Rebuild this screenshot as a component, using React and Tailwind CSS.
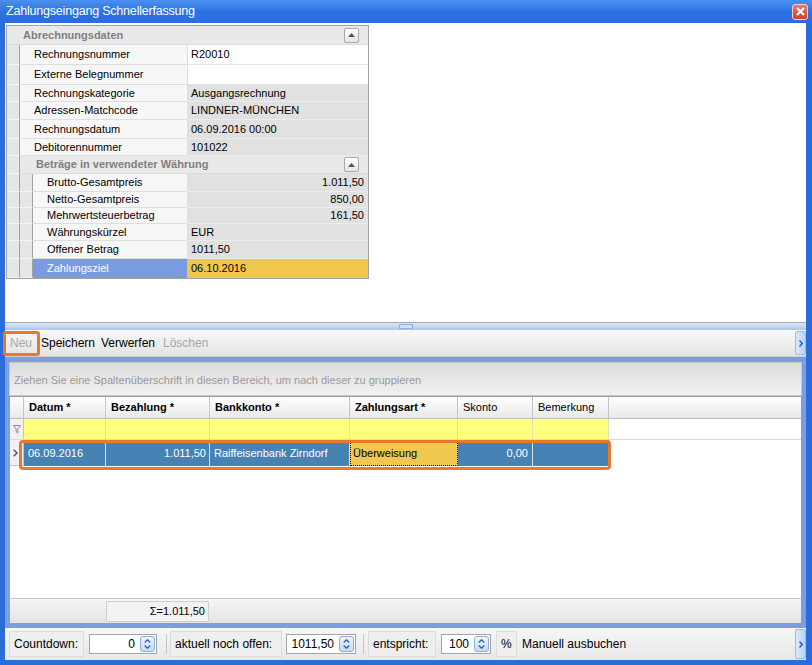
import React from "react";

const UpArrow = ({ color = "#555" }) => (
  <svg width="7" height="4" viewBox="0 0 7 4">
    <path d="M0 4 L3.5 0 L7 4Z" fill={color} />
  </svg>
);

const CollapseBtn = () => (
  <div className="w-[15px] h-[15px] rounded-[2px] border border-[#a9a9a9] bg-linear-to-b from-white to-[#e4e4e4] flex items-center justify-center">
    <UpArrow />
  </div>
);

const Spin = () => (
  <div className="w-[15px] h-[16px] rounded-[3px] border border-[#8eb0dd] bg-linear-to-b from-[#eef5fd] to-[#c3d9f4] flex flex-col items-center justify-center gap-[2px]">
    <svg width="7" height="4" viewBox="0 0 7 4">
      <path d="M0.7 3.5 L3.5 0.8 L6.3 3.5" fill="none" stroke="#2f62ad" strokeWidth="1.3" />
    </svg>
    <svg width="7" height="4" viewBox="0 0 7 4">
      <path d="M0.7 0.5 L3.5 3.2 L6.3 0.5" fill="none" stroke="#2f62ad" strokeWidth="1.3" />
    </svg>
  </div>
);

const ScrollBtn = ({ h }) => (
  <div className={`w-[11px] ${h} rounded-[2px] border border-[#9dbde9] bg-linear-to-r from-[#dbe9fb] to-[#b9d3f3] flex items-center justify-center`}>
    <svg width="4" height="7" viewBox="0 0 4 7">
      <path d="M0.5 0.5 L3.2 3.5 L0.5 6.5" fill="none" stroke="#1f5cc4" strokeWidth="1.4" />
    </svg>
  </div>
);

const rows1 = [
  { l: "Rechnungsnummer", v: "R20010", h: "h-[20px]", white: true },
  { l: "Externe Belegnummer", v: "", h: "h-[20px]", white: true },
  { l: "Rechnungskategorie", v: "Ausgangsrechnung", h: "h-[17px]" },
  { l: "Adressen-Matchcode", v: "LINDNER-MÜNCHEN", h: "h-[18px]" },
  { l: "Rechnungsdatum", v: "06.09.2016 00:00", h: "h-[19px]" },
  { l: "Debitorennummer", v: "101022", h: "h-[17px]" },
];

const rows2 = [
  { l: "Brutto-Gesamtpreis", v: "1.011,50", h: "h-[18px]", r: true },
  { l: "Netto-Gesamtpreis", v: "850,00", h: "h-[16px]", r: true },
  { l: "Mehrwertsteuerbetrag", v: "161,50", h: "h-[16px]", r: true },
  { l: "Währungskürzel", v: "EUR", h: "h-[17px]" },
  { l: "Offener Betrag", v: "1011,50", h: "h-[18px]" },
  { l: "Zahlungsziel", v: "06.10.2016", h: "h-[19px]", sel: true },
];

const Margin = () => <div className="w-[13px] shrink-0 bg-[#e6e6e6] border-b border-[#f3f3f3] border-r border-r-[#a3a3a3]" />;

const PropertyGrid = () => (
  <div className="ml-[1px] mt-[2px] w-[363px] border border-[#a3a3a3] bg-white text-[11px] text-black">
    <div className="h-[19px] flex items-center justify-between bg-[#e9e9e9] pl-[16px] pr-[9px] border-b border-[#dcdcdc]">
      <span className="font-bold text-[#808080]">Abrechnungsdaten</span>
      <CollapseBtn />
    </div>
    {rows1.map((r) => (
      <div key={r.l} className={`flex ${r.h}`}>
        <Margin />
        <div className="w-[167px] shrink-0 flex items-center pl-[14px] bg-[#f7f7f7] border-b border-[#dedede]">{r.l}</div>
        <div className={`flex-1 flex items-center pl-[3px] border-l border-[#dedede] border-b ${r.white ? "bg-white border-b-[#e4e4e4]" : "bg-[#e1e1e1] border-b-[#ececec]"}`}>{r.v}</div>
      </div>
    ))}
    <div className="flex h-[18px]">
      <Margin />
      <div className="flex-1 flex items-center justify-between bg-[#e9e9e9] pl-[16px] pr-[9px] border-b border-[#dcdcdc]">
        <span className="font-bold text-[#808080]">Beträge in verwendeter Währung</span>
        <CollapseBtn />
      </div>
    </div>
    {rows2.map((r) => (
      <div key={r.l} className={`flex ${r.h}`}>
        <Margin />
        <Margin />
        <div className={`w-[154px] shrink-0 flex items-center pl-[14px] border-b ${r.sel ? "bg-[#7b9be1] text-white border-[#7b9be1]" : "bg-[#f7f7f7] border-[#dedede]"}`}>{r.l}</div>
        <div className={`flex-1 flex items-center border-l border-b ${r.r ? "justify-end pr-[4px]" : "pl-[3px]"} ${r.sel ? "bg-[#f0c850] border-[#f0c850]" : "bg-[#e1e1e1] border-l-[#dedede] border-b-[#ececec]"}`}>{r.v}</div>
      </div>
    ))}
  </div>
);

const cols = [
  { t: "Datum *", w: "w-[82px]", b: true },
  { t: "Bezahlung *", w: "w-[104px]", b: true },
  { t: "Bankkonto *", w: "w-[140px]", b: true },
  { t: "Zahlungsart *", w: "w-[108px]", b: true },
  { t: "Skonto", w: "w-[75px]" },
  { t: "Bemerkung", w: "w-[76px]" },
];

const Grid = () => (
  <div className="flex-1 flex flex-col border border-[#9c9c9c] bg-white text-[11px]">
    {/* header */}
    <div className="h-[22px] flex bg-linear-to-b from-white to-[#e9e9e9] border-b border-[#bdbdbd]">
      <div className="w-[14px] border-r border-[#c4c4c4]" />
      {cols.map((c) => (
        <div key={c.t} className={`${c.w} flex items-center pl-[5px] border-r border-[#c4c4c4] ${c.b ? "font-bold" : ""}`}>{c.t}</div>
      ))}
      <div className="flex-1" />
    </div>
    {/* filter row */}
    <div className="h-[21px] flex border-b border-[#dadada]">
      <div className="w-[14px] flex items-center justify-center bg-[#f1f1f1] border-r border-[#c4c4c4]">
        <svg width="8" height="9" viewBox="0 0 8 9">
          <path d="M0.5 0.5 H7.5 L4.8 4 V8 L3.2 7 V4 Z" fill="none" stroke="#8a8a8a" strokeWidth="1" />
        </svg>
      </div>
      {cols.map((c) => (
        <div key={c.t} className={`${c.w} bg-[#ffff80] border-r border-[#e2e2b0]`} />
      ))}
      <div className="flex-1" />
    </div>
    {/* data row */}
    <div className="relative h-[26px] flex">
      <div className="w-[14px] flex items-center pl-[3px] bg-[#f1f1f1] border-r border-b border-[#c4c4c4]">
        <svg width="5" height="8" viewBox="0 0 5 8">
          <path d="M0.7 0.7 L4 4 L0.7 7.3" fill="none" stroke="#555" strokeWidth="1.5" />
        </svg>
      </div>
      <div className="w-[82px] flex items-center pl-[4px] bg-[#4682b4] text-white border-r border-[#d6e2ee]">06.09.2016</div>
      <div className="w-[104px] flex items-center justify-end pr-[3px] bg-[#4682b4] text-white border-r border-[#d6e2ee]">1.011,50</div>
      <div className="w-[140px] flex items-center pl-[4px] bg-[#4682b4] text-white border-r border-[#d6e2ee]">Raiffeisenbank Zirndorf</div>
      <div className="w-[108px] flex items-center pl-[2px] bg-[#f0c850] text-black border border-dotted border-black">Überweisung</div>
      <div className="w-[75px] flex items-center justify-end pr-[4px] bg-[#4682b4] text-white border-r border-[#d6e2ee]">0,00</div>
      <div className="w-[76px] bg-[#4682b4]" />
      <div className="flex-1" />
      <div className="absolute left-[9px] top-0 w-[592px] h-[30px] border-[3px] border-[#e8792a] rounded-[4px]" />
    </div>
    <div className="flex-1" />
    {/* summary */}
    <div className="h-[25px] flex items-center bg-linear-to-b from-[#f6f6f6] to-[#e3e3e3] border-t border-[#c8c8c8]">
      <div className="ml-[96px] w-[103px] h-[21px] flex items-center justify-end pr-[3px] bg-[#f2f2f2] border border-[#cfcfcf]">Σ=1.011,50</div>
    </div>
  </div>
);

const LabelBox = ({ w, children }) => (
  <div className={`${w} h-[26px] flex items-center pl-[4px] border border-[#dcdcdc] bg-[#efefef]`}>{children}</div>
);

const NumInput = ({ w, v }) => (
  <div className={`${w} h-[20px] flex items-center justify-end gap-[5px] pr-[1px] bg-white border border-[#a5a5a5]`}>
    <span>{v}</span>
    <Spin />
  </div>
);

export default function App() {
  return (
    <div className="w-[812px] h-[665px] flex flex-col bg-[#2b6cd9] font-['Liberation_Sans',Arial,sans-serif] text-[11px] text-black overflow-hidden">
      {/* title bar */}
      <div className="h-[23px] shrink-0 flex items-center justify-between pl-[6px] pr-[4px] bg-linear-to-b from-[#4b90f0] via-[#2c73e2] to-[#2a6cdc]">
        <span className="text-white text-[12.5px] tracking-[-0.2px]">Zahlungseingang Schnellerfassung</span>
        <div className="w-[16px] h-[16px] rounded-[3px] border border-[#f5d0c8] bg-linear-to-b from-[#ec7a66] to-[#c9402c] flex items-center justify-center">
          <svg width="9" height="9" viewBox="0 0 9 9">
            <path d="M1 1 L8 8 M8 1 L1 8" stroke="white" strokeWidth="2.2" />
          </svg>
        </div>
      </div>
      <div className="flex-1 flex flex-col ml-[5px] mr-[6px] mb-[5px]">
        {/* top area */}
        <div className="h-[299px] shrink-0 bg-white">
          <PropertyGrid />
        </div>
        {/* splitter */}
        <div className="h-[8px] shrink-0 border-t border-[#a9a9a9] bg-linear-to-b from-[#dde9fa] to-[#a9c6ef] flex justify-center">
          <div className="w-[14px] h-[5px] mt-[1px] border border-[#8fb2e4] bg-[#cfe0f7]" />
        </div>
        {/* toolbar */}
        <div className="h-[27px] shrink-0 flex items-center bg-linear-to-b from-[#f8f8f8] to-[#e4e4e4] text-[12px] border-b border-[#cfcfcf]">
          <div className="relative ml-[-2px] w-[37px] h-[25px] flex items-center pl-[7px] text-[#a6a6a6]">
            Neu
            <div className="absolute inset-0 border-[3px] border-[#e8792a] rounded-[3px]" />
          </div>
          <span className="w-[61px] pl-[1px]">Speichern</span>
          <span className="w-[62px]">Verwerfen</span>
          <span className="text-[#a6a6a6]">Löschen</span>
          <div className="ml-auto mr-0">
            <ScrollBtn h="h-[24px]" />
          </div>
        </div>
        {/* grid panel */}
        <div className="flex-1 flex flex-col bg-[#7d9de3] pt-[5px] px-[4px] pb-[4px]">
          <div className="h-[34px] shrink-0 flex items-center pl-[4px] pt-[3px] border border-[#c8c8c8] bg-linear-to-b from-[#dcdcdc] to-[#f1f1f1] text-[#9a9a9a] text-[11px]">
            Ziehen Sie eine Spaltenüberschrift in diesen Bereich, um nach dieser zu gruppieren
          </div>
          <Grid />
        </div>
        {/* bottom toolbar */}
        <div className="h-[32px] shrink-0 flex items-center bg-linear-to-b from-[#f6f6f6] to-[#e8e8e8] text-[12px]">
          <div className="ml-[4px]"><LabelBox w="w-[75px]">Countdown:</LabelBox></div>
          <div className="ml-[5px]"><NumInput w="w-[68px]" v="0" /></div>
          <div className="ml-[9px] w-px h-[20px] bg-[#c4c4c4]" />
          <div className="ml-[3px]"><LabelBox w="w-[112px]">aktuell noch offen:</LabelBox></div>
          <div className="ml-[4px]"><NumInput w="w-[70px]" v="1011,50" /></div>
          <div className="ml-[7px] w-px h-[20px] bg-[#c4c4c4]" />
          <div className="ml-[4px]"><LabelBox w="w-[68px]">entspricht:</LabelBox></div>
          <div className="ml-[5px]"><NumInput w="w-[50px]" v="100" /></div>
          <div className="ml-[5px]"><LabelBox w="w-[21px]">%</LabelBox></div>
          <span className="ml-[5px]">Manuell ausbuchen</span>
          <div className="ml-auto">
            <ScrollBtn h="h-[30px]" />
          </div>
        </div>
      </div>
    </div>
  );
}
